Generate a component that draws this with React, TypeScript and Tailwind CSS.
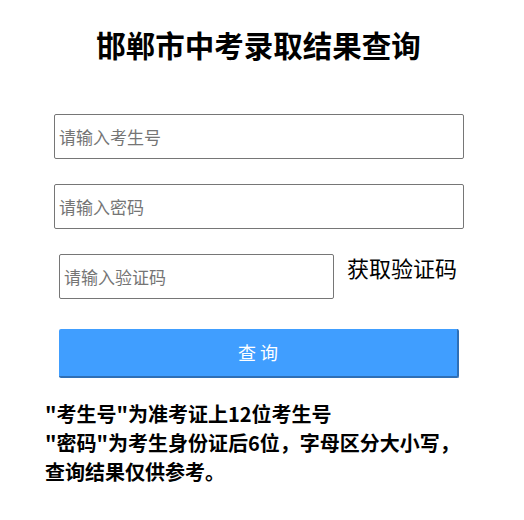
import { useState } from "react";

export default function App() {
  const [examNo, setExamNo] = useState("");
  const [password, setPassword] = useState("");
  const [code, setCode] = useState("");

  return (
    <div className="w-[524px] h-[520px] bg-white text-black font-['Noto_Sans_CJK_SC','Liberation_Sans',sans-serif] flex flex-col">
      <h1 className="pt-[25px] pr-[7px] h-[62px] text-center text-[29.5px] leading-[38px] font-bold">
        邯郸市中考录取结果查询
      </h1>

      {/* 考生号 / 密码 */}
      <div className="mt-[52px] flex flex-col gap-[25px] pl-[54px]">
        <input
          type="text"
          value={examNo}
          onChange={(e) => setExamNo(e.target.value)}
          placeholder="请输入考生号"
          className="w-[410px] h-[45px] border border-[#767676] rounded-[2px] px-[4px] text-[17px] placeholder:text-[#757575] outline-none"
        />
        <input
          type="password"
          value={password}
          onChange={(e) => setPassword(e.target.value)}
          placeholder="请输入密码"
          className="w-[410px] h-[45px] border border-[#767676] rounded-[2px] px-[4px] text-[17px] placeholder:text-[#757575] outline-none"
        />
      </div>

      {/* 验证码 */}
      <div className="mt-[25px] pl-[59px] flex items-start gap-[13px]">
        <input
          type="text"
          value={code}
          onChange={(e) => setCode(e.target.value)}
          placeholder="请输入验证码"
          className="w-[275px] h-[45px] border border-[#767676] rounded-[2px] px-[4px] text-[17px] placeholder:text-[#757575] outline-none"
        />
        <span className="mt-[-2px] text-[22px] leading-[30px] cursor-pointer">获取验证码</span>
      </div>

      <div className="mt-[30px] pl-[59px]">
        <button className="w-[400px] h-[49px] bg-[#409eff] border-r-2 border-b-2 border-[#2f6fb5] rounded-[2px] text-white text-[18px]">
          查 询
        </button>
      </div>

      <div className="mt-[21px] pl-[45px] text-[20px] leading-[29px] font-bold">
        <p>"考生号"为准考证上12位考生号</p>
        <p>"密码"为考生身份证后6位，字母区分大小写，</p>
        <p>查询结果仅供参考。</p>
      </div>
    </div>
  );
}
